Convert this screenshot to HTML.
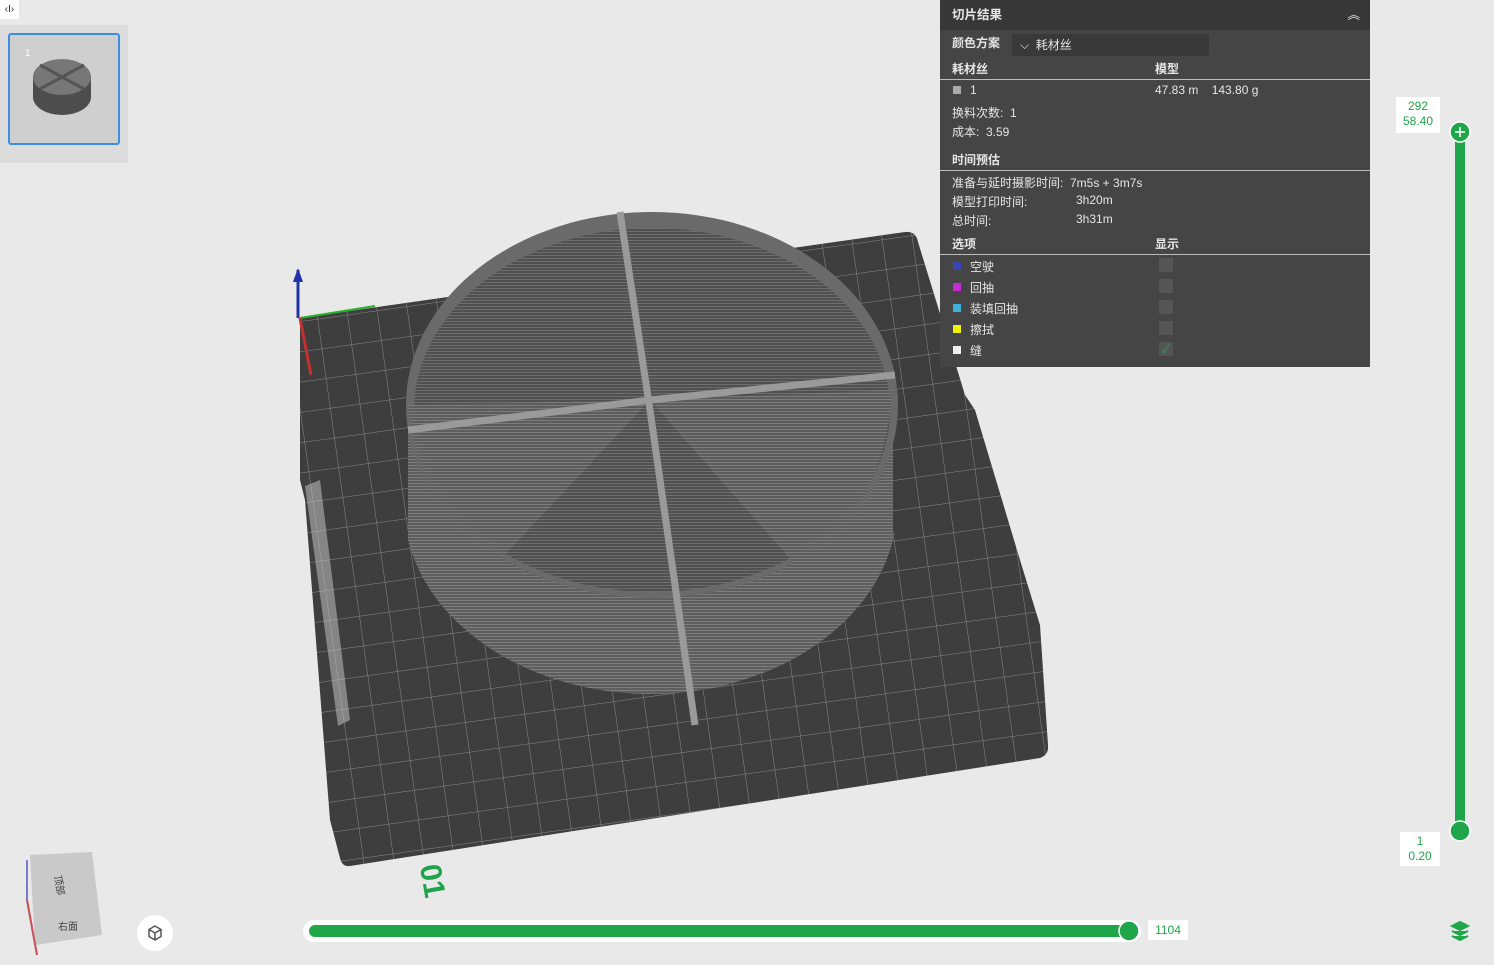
<!DOCTYPE html>
<html><head><meta charset="utf-8"><style>
body{margin:0;width:1494px;height:965px;background:#e9e9e9;overflow:hidden;position:relative;font-family:"Liberation Sans","Noto Sans CJK SC",sans-serif;}
.abs{position:absolute}
#panel{left:940px;top:0;width:430px;height:367px;background:#454545;color:#e6e6e6;font-size:12px}
#panel .hd{height:30px;background:#373737;font-weight:bold;line-height:30px;padding-left:12px;font-size:12.5px}
.t{position:absolute;white-space:nowrap}
.b{font-weight:bold}
.line{position:absolute;left:0;width:430px;height:1px;background:#bdbdbd}
.sw{position:absolute;width:8px;height:8px}
.cb{position:absolute;left:219px;width:14px;height:14px;background:#555;border-radius:1px}
</style></head><body>
<div class="abs" style="left:0;top:0;width:19px;height:19px;background:#fff;font-size:10px;line-height:19px;text-align:center;color:#333">‹I›</div>
<div class="abs" style="left:0;top:25px;width:128px;height:138px;background:#dcdcdc"></div>
<div class="abs" style="left:8px;top:33px;width:108px;height:108px;border:2px solid #3d8ee0;border-radius:3px;background:#cfcfcf"></div>
<div class="abs" style="left:25px;top:48px;font-size:10px;color:#fff">1</div>
<svg class="abs" style="left:30px;top:55px" width="64" height="64"><path d="M3 22 V42 A29 18 0 0 0 61 42 V22" fill="#4d4d4d"/><ellipse cx="32" cy="22" rx="29" ry="18" fill="#777"/><path d="M10 10 L54 34 M54 10 L10 34" stroke="#555" stroke-width="3"/></svg>

<svg class="abs" style="left:0;top:0" width="1494" height="965">
<defs><pattern id="g" width="30" height="30" patternUnits="userSpaceOnUse" patternTransform="rotate(-8)"><rect width="30" height="30" fill="#3e3e3e"/><path d="M0 0H30M0 0V30" stroke="#8a8a8a" stroke-width="1"/></pattern>
<pattern id="s" width="3" height="3" patternUnits="userSpaceOnUse"><rect width="3" height="3" fill="#5e5e5e"/><rect width="3" height="1" fill="#7e7e7e"/></pattern>
<pattern id="s2" width="3" height="3" patternUnits="userSpaceOnUse"><rect width="3" height="3" fill="#505050"/><rect width="3" height="1" fill="#6e6e6e"/></pattern></defs>
<path d="M300 318 L905 232 Q916 231 918 242 L965 395 L975 410 L1020 560 L1040 625 L1048 745 Q1049 755 1040 758 L350 866 Q342 867 340 858 L330 820 L305 500 L300 480 Z" fill="url(#g)"/>
<path d="M305 486 L320 480 L350 720 L338 726 Z" fill="#ccc" opacity=".5"/>
<path d="M298 270 L298 318" stroke="#2332a8" stroke-width="3"/><path d="M293 282 L298 268 L303 282Z" fill="#2332a8"/>
<path d="M300 318 L375 306" stroke="#2ab32a" stroke-width="2"/><path d="M300 318 L311 375" stroke="#c23030" stroke-width="3"/>
<path d="M408 405 V540 A247 190 0 0 0 893 540 V405 Z" fill="url(#s)"/>
<ellipse cx="652" cy="405" rx="246" ry="193" fill="#6a6a6a"/>
<ellipse cx="652" cy="410" rx="238" ry="182" fill="url(#s2)"/>
<path d="M408 405 Q420 520 500 560 L650 400 Z" fill="url(#s)" opacity=".9"/>
<path d="M650 400 L893 390 Q880 520 800 570 Z" fill="url(#s)" opacity=".9"/>
<path d="M620 212 L650 410 L695 725 M408 430 L650 400 L895 375" stroke="#9a9a9a" stroke-width="7" fill="none"/>
<text x="398" y="868" transform="rotate(80 410 880)" font-size="30" font-weight="bold" fill="#1fa34a" font-family="Liberation Sans">01</text>
<path d="M1460 132 V830" stroke="#1fa64a" stroke-width="10"/>
<circle cx="1460" cy="132" r="10" fill="#1fa64a" stroke="#fff" stroke-width="1.5"/><path d="M1455 132H1465M1460 127V137" stroke="#fff" stroke-width="1.5"/>
<circle cx="1460" cy="831" r="10" fill="#1fa64a" stroke="#fff" stroke-width="1.5"/>
<rect x="303" y="920" width="838" height="22" rx="11" fill="#fff"/>
<rect x="309" y="925" width="820" height="12" rx="6" fill="#1fa64a"/>
<circle cx="1129" cy="931" r="10" fill="#1fa64a" stroke="#fff" stroke-width="1.5"/>
<path d="M30 855 L92 852 L102 935 L35 945 Z" fill="#c9c9c9"/>
<path d="M27 860 V900 L37 955" stroke="#7a7ad0" stroke-width="2" fill="none"/><path d="M27 900 L37 955" stroke="#c55" stroke-width="2"/>
<text x="55" y="885" font-size="10" fill="#444" transform="rotate(80 60 880)">顶部</text><text x="58" y="930" font-size="10" fill="#444">右面</text>
<circle cx="155" cy="933" r="18" fill="#fff"/><path d="M155 926 L161 929.5 V936.5 L155 940 L149 936.5 V929.5Z M149 929.5 L155 933 L161 929.5 M155 933 V940" stroke="#555" stroke-width="1.5" fill="none"/>
<path d="M1452 926 L1460 922 L1468 926 L1460 930Z M1452 931 L1460 935 L1468 931 M1452 936 L1460 940 L1468 936" stroke="#1fa64a" stroke-width="2" fill="#1fa64a"/>
</svg>
<div class="abs" style="left:1396px;top:97px;width:44px;height:34px;background:#fff;color:#1fa64a;font-size:12px;text-align:center;line-height:15px;padding-top:2px">292<br>58.40</div>
<div class="abs" style="left:1400px;top:832px;width:40px;height:32px;background:#fff;color:#1fa64a;font-size:12px;text-align:center;line-height:15px;padding-top:2px">1<br>0.20</div>
<div class="abs" style="left:1148px;top:920px;width:40px;height:20px;background:#fff;color:#1fa64a;font-size:12px;text-align:center;line-height:20px">1104</div>

<div id="panel" class="abs">
<div class="hd">切片结果<span style="position:absolute;right:10px;font-weight:normal">︽</span></div>
<div class="t b" style="left:12px;top:34px">颜色方案</div>
<div class="t" style="left:72px;top:34px;width:197px;height:22px;background:#393939;border-radius:3px;line-height:22px;padding-left:8px;box-sizing:border-box">⌵ &nbsp;耗材丝</div>
<div class="t b" style="left:12px;top:60px">耗材丝</div><div class="t b" style="left:215px;top:60px">模型</div>
<div class="line" style="top:79px"></div>
<div class="sw" style="left:13px;top:86px;background:#aaa"></div><div class="t" style="left:30px;top:83px">1</div>
<div class="t" style="left:215px;top:83px">47.83 m &nbsp;&nbsp;&nbsp;143.80 g</div>
<div class="t" style="left:12px;top:104px">换料次数: &nbsp;1</div>
<div class="t" style="left:12px;top:123px">成本: &nbsp;3.59</div>
<div class="t b" style="left:12px;top:151px">时间预估</div>
<div class="line" style="top:170px"></div>
<div class="t" style="left:12px;top:174px">准备与延时摄影时间: &nbsp;7m5s + 3m7s</div>
<div class="t" style="left:12px;top:193px">模型打印时间:</div><div class="t" style="left:136px;top:193px">3h20m</div>
<div class="t" style="left:12px;top:212px">总时间:</div><div class="t" style="left:136px;top:212px">3h31m</div>
<div class="t b" style="left:12px;top:235px">选项</div><div class="t b" style="left:215px;top:235px">显示</div>
<div class="line" style="top:254px"></div>
<div class="sw" style="left:13px;top:262px;background:#3a45b0"></div><div class="t" style="left:30px;top:258px">空驶</div><div class="cb" style="top:258px"></div>
<div class="sw" style="left:13px;top:283px;background:#c62bd6"></div><div class="t" style="left:30px;top:279px">回抽</div><div class="cb" style="top:279px"></div>
<div class="sw" style="left:13px;top:304px;background:#3db1d8"></div><div class="t" style="left:30px;top:300px">装填回抽</div><div class="cb" style="top:300px"></div>
<div class="sw" style="left:13px;top:325px;background:#f0f000"></div><div class="t" style="left:30px;top:321px">擦拭</div><div class="cb" style="top:321px"></div>
<div class="sw" style="left:13px;top:346px;background:#eee"></div><div class="t" style="left:30px;top:342px">缝</div><div class="cb" style="top:342px;color:#1fa64a;font-size:12px;line-height:14px;text-align:center">✓</div>
</div>
</body></html>
